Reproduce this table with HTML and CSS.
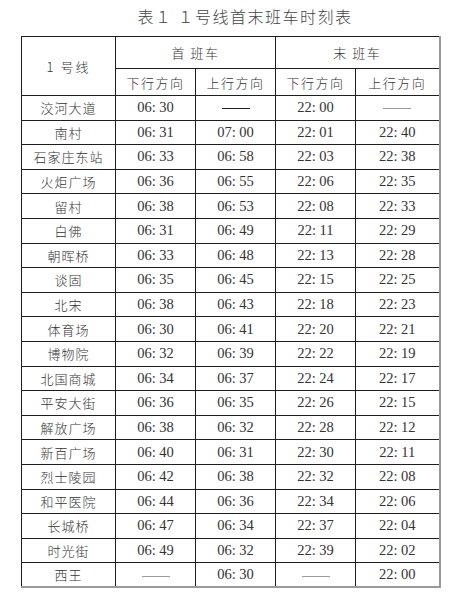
FILE: index.html
```html
<!DOCTYPE html>
<html lang="zh-CN">
<head>
<meta charset="utf-8">
<link rel="stylesheet" href="styles.css">
</head>
<body>
<div class="page">
  <h1 class="title">表１ １号线首末班车时刻表</h1>
  <table class="timetable">
    <colgroup>
      <col class="c-station"><col class="c-t"><col class="c-t"><col class="c-t"><col class="c-last">
    </colgroup>
    <thead>
      <tr class="h1">
        <th rowspan="2" class="line">1 号线</th>
        <th colspan="2">首 班车</th>
        <th colspan="2">末 班车</th>
      </tr>
      <tr class="h2">
        <th>下行方向</th><th>上行方向</th><th>下行方向</th><th>上行方向</th>
      </tr>
    </thead>
    <tbody>
      <tr><td class="st">洨河大道</td><td>06: 30</td><td><span class="dash dark"></span></td><td>22: 00</td><td><span class="dash"></span></td></tr>
      <tr><td class="st">南村</td><td>06: 31</td><td>07: 00</td><td>22: 01</td><td>22: 40</td></tr>
      <tr><td class="st">石家庄东站</td><td>06: 33</td><td>06: 58</td><td>22: 03</td><td>22: 38</td></tr>
      <tr><td class="st">火炬广场</td><td>06: 36</td><td>06: 55</td><td>22: 06</td><td>22: 35</td></tr>
      <tr><td class="st">留村</td><td>06: 38</td><td>06: 53</td><td>22: 08</td><td>22: 33</td></tr>
      <tr><td class="st">白佛</td><td>06: 31</td><td>06: 49</td><td>22: 11</td><td>22: 29</td></tr>
      <tr><td class="st">朝晖桥</td><td>06: 33</td><td>06: 48</td><td>22: 13</td><td>22: 28</td></tr>
      <tr><td class="st">谈固</td><td>06: 35</td><td>06: 45</td><td>22: 15</td><td>22: 25</td></tr>
      <tr><td class="st">北宋</td><td>06: 38</td><td>06: 43</td><td>22: 18</td><td>22: 23</td></tr>
      <tr><td class="st">体育场</td><td>06: 30</td><td>06: 41</td><td>22: 20</td><td>22: 21</td></tr>
      <tr><td class="st">博物院</td><td>06: 32</td><td>06: 39</td><td>22: 22</td><td>22: 19</td></tr>
      <tr><td class="st">北国商城</td><td>06: 34</td><td>06: 37</td><td>22: 24</td><td>22: 17</td></tr>
      <tr><td class="st">平安大街</td><td>06: 36</td><td>06: 35</td><td>22: 26</td><td>22: 15</td></tr>
      <tr><td class="st">解放广场</td><td>06: 38</td><td>06: 32</td><td>22: 28</td><td>22: 12</td></tr>
      <tr><td class="st">新百广场</td><td>06: 40</td><td>06: 31</td><td>22: 30</td><td>22: 11</td></tr>
      <tr><td class="st">烈士陵园</td><td>06: 42</td><td>06: 38</td><td>22: 32</td><td>22: 08</td></tr>
      <tr><td class="st">和平医院</td><td>06: 44</td><td>06: 36</td><td>22: 34</td><td>22: 06</td></tr>
      <tr><td class="st">长城桥</td><td>06: 47</td><td>06: 34</td><td>22: 37</td><td>22: 04</td></tr>
      <tr><td class="st">时光街</td><td>06: 49</td><td>06: 32</td><td>22: 39</td><td>22: 02</td></tr>
      <tr><td class="st">西王</td><td><span class="dash"></span></td><td>06: 30</td><td><span class="dash"></span></td><td>22: 00</td></tr>
    </tbody>
  </table>
</div>
</body>
</html>
```
FILE: styles.css
```css
html, body {
  margin: 0;
  padding: 0;
  background: #ffffff;
}
.page {
  width: 460px;
  height: 594px;
  overflow: hidden;
}
.title {
  margin: 0;
  height: 36px;
  padding: 6px 0 0 30px;
  box-sizing: border-box;
  text-align: center;
  font-family: "Noto Sans CJK SC", sans-serif;
  font-weight: 300;
  font-size: 16px;
  line-height: 20px;
  letter-spacing: 1.5px;
  color: #444;
}
.timetable {
  margin-left: 21px;
  width: 418px;
  table-layout: fixed;
  border-collapse: collapse;
  color: #333;
  font-family: "Liberation Serif", "Noto Sans CJK SC", serif;
  font-size: 14.5px;
}
.c-station { width: 94px; }
.c-t { width: 80px; }
.c-last { width: 84px; }
.timetable th, .timetable td {
  border: 1px solid #1e1e1e;
  padding: 0;
  text-align: center;
  vertical-align: middle;
  font-weight: normal;
}
.timetable th {
  font-family: "Noto Sans CJK SC", sans-serif;
  font-weight: 300;
  font-size: 13px;
  letter-spacing: 1.5px;
}
.timetable .h1 th { height: 31px; }
.timetable .h2 th { height: 26px; }
.timetable th.line { letter-spacing: 2px; }
.timetable tbody tr { height: 24.6px; }
.timetable td.st {
  font-family: "Noto Sans CJK SC", sans-serif;
  font-weight: 300;
  font-size: 13px;
  letter-spacing: 1px;
}
.timetable tr > :last-child { border-right: 2px solid #9a9a9a; }
.timetable tbody tr:last-child td { border-bottom: 2px solid #9a9a9a; }
.dash {
  display: inline-block;
  width: 28px;
  height: 0;
  border-top: 1px solid #999;
  vertical-align: middle;
}
.dash.dark { border-top-color: #222; }
```
